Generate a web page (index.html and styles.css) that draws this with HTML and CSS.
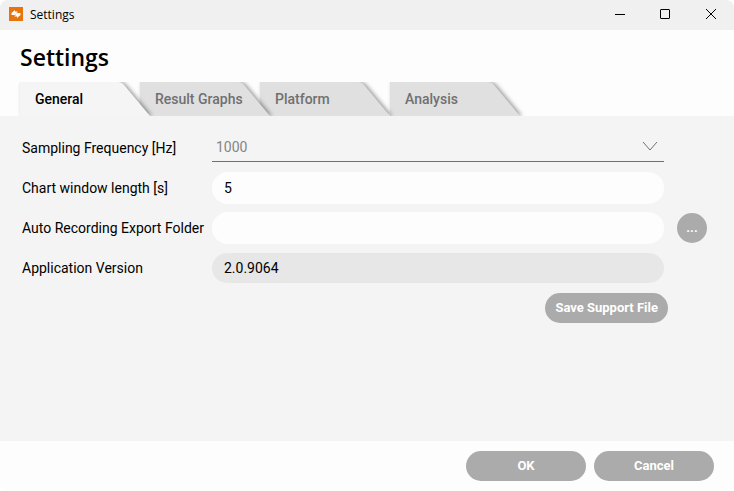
FILE: index.html
```html
<!DOCTYPE html>
<html lang="en">
<head>
<meta charset="utf-8">
<title>Settings</title>
<link rel="stylesheet" href="styles.css">
</head>
<body>
<div class="window">
  <header class="titlebar">
    <svg class="app-icon" viewBox="0 0 14 14" aria-hidden="true"><rect width="14" height="14" fill="#e8740c"/><path d="M2.500 6 6 3V4.500H8.500V6H11.500V8L8 11V9.500H5.500V8H2.500Z" fill="#fff"/><path d="M5 8.200H7M7.500 5.800H9.500" stroke="#e8740c" stroke-width=".6"/></svg>
    <span class="caption">Settings</span>
    <button class="window-button" type="button" aria-label="Minimize"><svg viewBox="0 0 12 12"><path d="M2 5.500H12"/></svg></button>
    <button class="window-button" type="button" aria-label="Maximize"><svg viewBox="0 0 12 12"><rect x="1.500" y="0.500" width="9" height="9" rx=".5"/></svg></button>
    <button class="window-button" type="button" aria-label="Close"><svg viewBox="0 0 12 12"><path d="M1 0 11 10M11 0 1 10"/></svg></button>
  </header>

  <h1 class="heading">Settings</h1>

  <nav class="tabs" role="tablist">
    <button class="tab tab-active" type="button" role="tab" aria-selected="true"><svg class="tab-shape" viewBox="0 0 130 34" aria-hidden="true"><path d="M0 34V2Q0 0 2 0H98Q102 0 105 4L130 34Z"/></svg><span>General</span></button>
    <button class="tab" type="button" role="tab" aria-selected="false"><svg class="tab-shape" viewBox="0 0 130 34" aria-hidden="true"><path d="M0 34V0H98Q102 0 105 4L130 34Z"/></svg><span>Result Graphs</span></button>
    <button class="tab tab-wide" type="button" role="tab" aria-selected="false"><svg class="tab-shape" viewBox="0 0 130 34" aria-hidden="true"><path d="M0 34V0H98Q102 0 105 4L130 34Z"/></svg><span>Platform</span></button>
    <button class="tab" type="button" role="tab" aria-selected="false"><svg class="tab-shape" viewBox="0 0 130 34" aria-hidden="true"><path d="M0 34V0H98Q102 0 105 4L130 34Z"/></svg><span>Analysis</span></button>
  </nav>

  <main class="panel">
    <div class="row">
      <label for="frequency">Sampling Frequency [Hz]</label>
      <div class="dropdown">
        <select id="frequency" class="select"><option>1000</option></select>
        <svg class="chevron" viewBox="0 0 16 10" aria-hidden="true"><path d="M1 1 8 9 15 1"/></svg>
      </div>
    </div>
    <div class="row">
      <label for="length">Chart window length [s]</label>
      <input id="length" class="field" type="text" value="5">
    </div>
    <div class="row">
      <label for="folder">Auto Recording Export Folder</label>
      <input id="folder" class="field" type="text">
      <button class="button browse" type="button" aria-label="Browse">...</button>
    </div>
    <div class="row">
      <label for="version">Application Version</label>
      <input id="version" class="field field-readonly" type="text" value="2.0.9064" readonly>
    </div>
    <div class="support">
      <button class="button" type="button">Save Support File</button>
    </div>
  </main>

  <footer class="footer">
    <button class="button action" type="button">OK</button>
    <button class="button action" type="button">Cancel</button>
  </footer>
</div>
</body>
</html>
```
FILE: styles.css
```css
* { box-sizing: border-box; }

body {
  margin: 0;
  background: #fff;
  color: #000;
  font: 14px/20px Roboto, "Liberation Sans", sans-serif;
}

button, input, select { font: inherit; }
button { border: 0; padding: 0; }

.window {
  display: flex;
  flex-direction: column;
  min-height: 100vh;
  border-radius: 8px;
  overflow: hidden;
  background: #fdfdfd;
}

.titlebar {
  display: flex;
  align-items: center;
  height: 30px;
  padding: 0 0 2px 9px;
  background: #f0f0f0;
}

.app-icon { width: 14px; height: 14px; }

.caption {
  flex: 1;
  margin-left: 7px;
  padding-top: 2px;
  font: 12px/16px "Open Sans", "Noto Sans", sans-serif;
}

.window-button {
  display: grid;
  place-items: center;
  width: 46px;
  height: 28px;
  padding-top: 2px;
  background: none;
}

.window-button svg {
  width: 12px;
  height: 12px;
  fill: none;
  stroke: #000;
}

.heading {
  margin: 0;
  padding: 11px 20px 9px;
  font: 600 23px/32px "Open Sans", "Noto Sans", sans-serif;
}

.tabs {
  display: flex;
  height: 34px;
  padding-left: 20px;
  overflow: hidden;
}

.tab {
  position: relative;
  flex: none;
  width: 130px;
  margin-right: -10px;
  padding-left: 15px;
  background: none;
  color: #707070;
  font-weight: 500;
  text-align: left;
}

.tab-wide { margin-right: 0; }
.tab:nth-child(1) { z-index: 4; }
.tab:nth-child(2) { z-index: 3; }
.tab:nth-child(3) { z-index: 2; }

.tab span { position: relative; }

.tab-shape {
  position: absolute;
  inset: 0;
  width: 100%;
  height: 100%;
  overflow: visible;
  fill: #e0e0e0;
  filter: drop-shadow(2px 0 2px rgba(0, 0, 0, .4));
}

.tab-active { color: #000; }
.tab-active .tab-shape { fill: #f5f5f5; }

.panel {
  flex: 1;
  padding: 12px 27px 12px 22px;
  background: #f4f4f4;
}

.row {
  display: grid;
  grid-template-columns: 190px 1fr 43px;
  align-items: center;
  height: 40px;
}

.dropdown { position: relative; }

.select {
  display: block;
  width: 100%;
  height: 28px;
  padding: 0 4px 2px;
  border: 0;
  border-bottom: 1px solid #707070;
  background: none;
  color: #858585;
  appearance: none;
}

.chevron {
  position: absolute;
  top: 7px;
  right: 6px;
  width: 16px;
  height: 10px;
  fill: none;
  stroke: #707070;
  pointer-events: none;
}

.field {
  width: 100%;
  height: 32px;
  padding: 0 12px;
  border: 0;
  border-radius: 16px;
  background: #fdfdfd;
  color: #000;
}

.field-readonly {
  height: 30px;
  background: #e7e7e7;
}

.button {
  height: 30px;
  padding: 0 10px;
  border-radius: 15px;
  background: #ababab;
  color: #fff;
  font-size: 13px;
  font-weight: 700;
}

.browse {
  justify-self: end;
  width: 30px;
  padding: 0;
}

.support {
  display: flex;
  justify-content: flex-end;
  padding: 5px 39px 0 0;
}

.footer {
  display: flex;
  justify-content: flex-end;
  gap: 8px;
  padding: 10px 20px;
}

.action { width: 120px; }
```
